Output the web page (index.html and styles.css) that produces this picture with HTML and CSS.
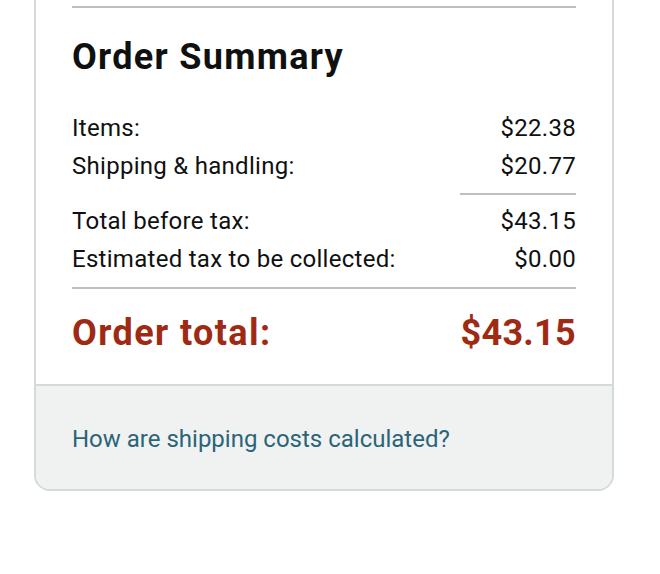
FILE: index.html
```html
<!DOCTYPE html>
<html lang="en">
<head>
<meta charset="utf-8">
<title>Order Summary</title>
<link rel="stylesheet" href="styles.css">
</head>
<body>
<div class="card">
  <div class="card-body">
    <div class="rule"></div>
    <h2 class="title">Order Summary</h2>
    <div class="row"><span>Items:</span><span>$22.38</span></div>
    <div class="row"><span>Shipping &amp; handling:</span><span>$20.77</span></div>
    <div class="rule-short"></div>
    <div class="row"><span>Total before tax:</span><span>$43.15</span></div>
    <div class="row"><span>Estimated tax to be collected:</span><span>$0.00</span></div>
    <div class="rule rule-total"></div>
    <div class="total"><span class="total-label">Order total:</span><span class="total-price">$43.15</span></div>
  </div>
  <div class="card-footer">
    <a class="link" href="#">How are shipping costs calculated?</a>
  </div>
</div>
</body>
</html>
```

FILE: styles.css
```css
html, body {
  margin: 0;
  padding: 0;
  background: #ffffff;
}
body {
  font-family: Roboto, "Liberation Sans", Arial, sans-serif;
  color: #0f1111;
}
.card {
  margin-left: 34px;
  width: 580px;
  box-sizing: border-box;
  border: 2px solid #d5d9d9;
  border-top: none;
  border-radius: 0 0 16px 16px;
  overflow: hidden;
}
.card-body {
  padding: 6px 36px 29px;
  background: #ffffff;
}
.rule {
  height: 2px;
  background: #bbbfbf;
}
.title {
  margin: 27px 0 30px;
  font-size: 36px;
  line-height: 44px;
  font-weight: 700;
  letter-spacing: 1.3px;
}
.row {
  display: flex;
  justify-content: space-between;
  font-size: 24px;
  line-height: 38px;
  letter-spacing: 0.28px;
}
.rule-short {
  width: 116px;
  height: 2px;
  background: #bbbfbf;
  margin: 8px 0 7px auto;
}
.rule-total {
  margin-top: 9px;
}
.total {
  display: flex;
  justify-content: space-between;
  margin-top: 22px;
  font-size: 36px;
  line-height: 44px;
  font-weight: 700;
  color: #9f2a14;
}
.total-label {
  letter-spacing: 1.4px;
}
.total-price {
  letter-spacing: 0.3px;
}
.card-footer {
  border-top: 2px solid #d5d9d9;
  background: #f0f2f2;
  padding: 34px 36px 31px;
}
.link {
  display: block;
  font-size: 24px;
  line-height: 38px;
  color: #2b6479;
  text-decoration: none;
}
```
